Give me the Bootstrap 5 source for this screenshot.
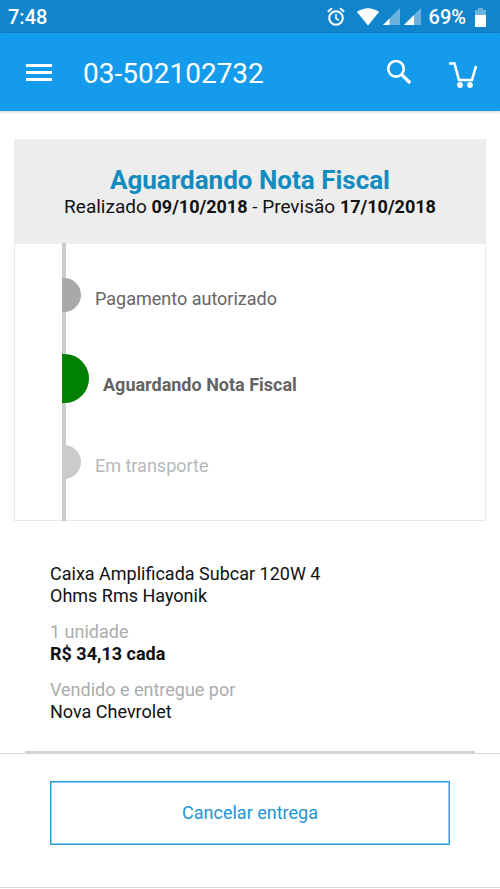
<!DOCTYPE html>
<html lang="pt-BR">
<head>
<meta charset="utf-8">
<meta name="viewport" content="width=device-width, initial-scale=1">
<title>Pedido 03-502102732</title>
<link href="https://cdn.jsdelivr.net/npm/bootstrap@5.3.0/dist/css/bootstrap.min.css" rel="stylesheet">
<style>
  body { font-family: Roboto, "Liberation Sans", sans-serif; font-size: 18px; line-height: 22px; color: #111; background: #fff; }
  svg { display: block; flex: none; }
  .status-bar { background: #1185cb; height: 33px; padding: 0 12px 0 8px; font-size: 20px; font-weight: 500; }
  .app-bar { background: #159bec; height: 78px; padding: 0 22px 0 25px; box-shadow: 0 1px 3px rgba(0,0,0,.2); }
  .app-title { font-size: 28px; line-height: 32px; font-weight: 400; margin-left: 30px; padding-top: 4px; }
  .icon-btn { border: 0; background: none; padding: 0; color: inherit; }
  .app-actions { gap: 36px; }
  .order-card { margin: 28px 14px 0; border: 1px solid #e9e9e9; }
  .order-head { background: #ededed; margin: -1px -1px 0; padding: 27px 8px 24px; }
  .order-head h2 { font-size: 26px; line-height: 28px; font-weight: 700; color: #128bc0; }
  .order-head p { font-size: 19px; line-height: 26px; }
  .order-head strong { font-size: 18px; }
  .steps { margin: -1px 0 -1px 47px; padding: 35px 0 42px; border-left: 4px solid #cbcbcb; gap: 42px; }
  .steps li { color: #666; gap: 14px; }
  .steps li::before { content: ""; width: 19px; height: 34px; margin-left: -4px; border-radius: 0 17px 17px 0; background: #a9a9a9; }
  .steps li.is-current { font-weight: 700; color: #636363; }
  .steps li.is-current::before { width: 27px; height: 49px; border-radius: 0 25px 25px 0; background: #008000; }
  .steps li.is-next { color: #b8b8b8; }
  .steps li.is-next::before { background: #cbcbcb; }
  .steps span { padding-top: 7px; }
  .steps .is-current span { padding-top: 12px; }
  .product { padding: 42px 50px 28px; }
  .product p { margin-bottom: 14px; }
  .product .caption { color: #acacac; }
  .rule { height: 2px; margin: 0 25px; background: #d2d2d2; }
  .actions { border-top: 1px solid #d8d8d8; border-bottom: 1px solid #d8d8d8; padding: 27px 50px 42px; }
  .btn-cancel { --bs-btn-color: #2196d6; --bs-btn-border-color: #2b9edb; --bs-btn-hover-color: #fff; --bs-btn-hover-bg: #2196d6; font-size: 18px; line-height: 22px; padding: 20px; border-width: 1px; outline: 1px solid #8fcbec; outline-offset: -2px; }
</style>
</head>
<body>
<div class="status-bar d-flex align-items-center text-white">
  <span class="me-auto">7:48</span>
  <svg width="18" height="20" viewBox="0 0 18 20" fill="none" stroke="#fff" stroke-width="2"><circle cx="9" cy="11" r="6.800"/><path d="M9 7v4.500l3 1.800" stroke-width="1.500"/><path d="M.8 4.800 5 1.300M17.200 4.800 13 1.300"/></svg>
  <svg class="ms-2 ps-1" width="26" height="18" viewBox="0 0 22 18" preserveAspectRatio="xMaxYMid"><path d="M0 4Q11-3.500 22 4L11 17.500z" fill="#fff"/></svg>
  <svg class="ms-1" width="17" height="17" viewBox="0 0 17 17"><path d="M17 0v17H0z" fill="#6bb3de"/><path d="M6.500 10.500V17H0z" fill="#fff"/></svg>
  <svg class="ms-1" width="17" height="17" viewBox="0 0 17 17"><path d="M17 0v17H0z" fill="#6bb3de"/><path d="M10 7v10H0z" fill="#fff"/></svg>
  <span class="mx-2">69%</span>
  <svg width="14" height="20" viewBox="0 0 14 20"><path d="M4 1h5v2h3v5H1V3h3z" fill="#6bb3de"/><path d="M1 8h11v12H1z" fill="#fff"/></svg>
</div>
<header class="app-bar d-flex align-items-center text-white">
  <button class="icon-btn" type="button" aria-label="Menu">
    <svg width="28" height="20" viewBox="0 0 28 20" stroke="#fff" stroke-width="3"><path d="M1 3.500h26M1 10.500h26M1 17.500h26"/></svg>
  </button>
  <h1 class="app-title mb-0 me-auto">03-502102732</h1>
  <div class="app-actions d-flex align-items-center">
    <button class="icon-btn" type="button" aria-label="Buscar">
      <svg width="26" height="26" viewBox="0 0 26 26" fill="none" stroke="#fff"><circle cx="10" cy="9.800" r="7.800" stroke-width="2.600"/><path d="m15.500 15.300 8.700 8.700" stroke-width="3.200"/></svg>
    </button>
    <button class="icon-btn pt-2" type="button" aria-label="Carrinho">
      <svg width="30" height="28" viewBox="0 0 30 28"><path d="M1 1.500h5.500L11 18h13l4-14" fill="none" stroke="#fff" stroke-width="2.600"/><circle cx="12" cy="23" r="2.900" fill="#fff"/><circle cx="22" cy="23" r="2.900" fill="#fff"/></svg>
    </button>
  </div>
</header>
<main>
  <section class="order-card">
    <div class="order-head text-center">
      <h2 class="mb-0">Aguardando Nota Fiscal</h2>
      <p class="mb-0">Realizado <strong>09/10/2018</strong> - Previsão <strong>17/10/2018</strong></p>
    </div>
    <ol class="steps list-unstyled d-flex flex-column">
      <li class="d-flex align-items-center"><span>Pagamento autorizado</span></li>
      <li class="is-current d-flex align-items-center"><span>Aguardando Nota Fiscal</span></li>
      <li class="is-next d-flex align-items-center"><span>Em transporte</span></li>
    </ol>
  </section>
  <section class="product">
    <div class="row g-0"><p class="col-9">Caixa Amplificada Subcar 120W 4 Ohms Rms Hayonik</p></div>
    <p><span class="caption">1 unidade</span><br><strong>R$ 34,13 cada</strong></p>
    <p class="mb-0"><span class="caption">Vendido e entregue por</span><br>Nova Chevrolet</p>
  </section>
  <div class="rule"></div>
  <div class="actions">
    <button class="btn btn-cancel w-100 rounded-0" type="button">Cancelar entrega</button>
  </div>
</main>
<script src="https://cdn.jsdelivr.net/npm/bootstrap@5.3.0/dist/js/bootstrap.bundle.min.js"></script>
</body>
</html>
